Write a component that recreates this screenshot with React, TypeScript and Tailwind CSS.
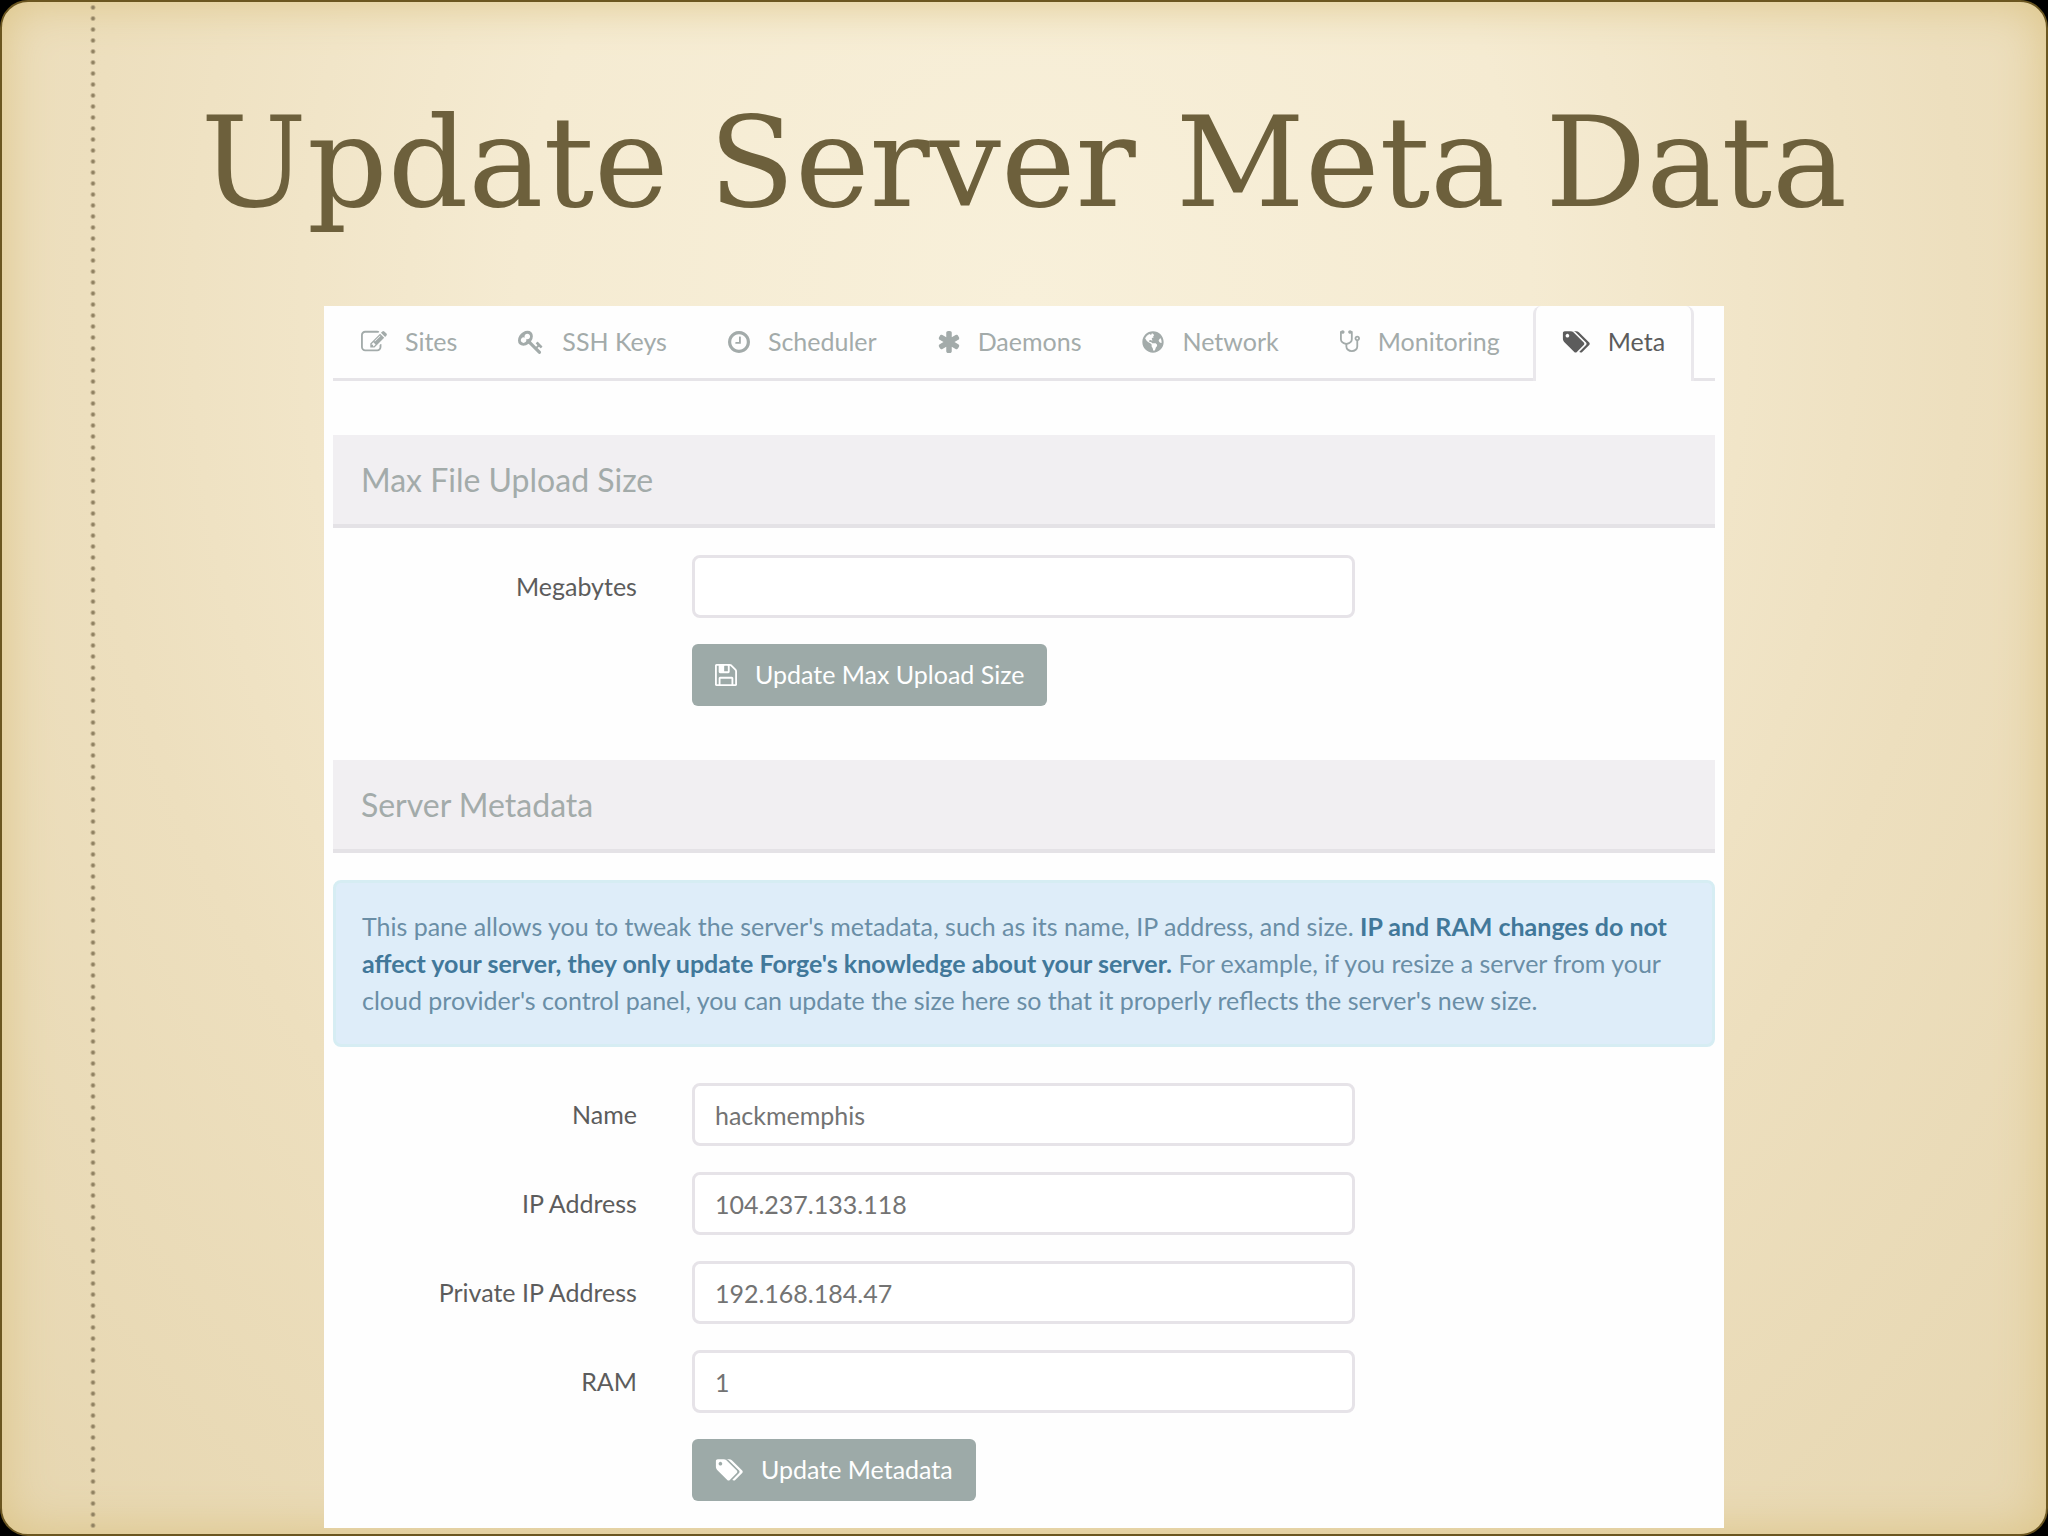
import { ReactNode } from "react"
import clsx from "clsx"
import { FaGlobeAmericas } from "react-icons/fa"

interface GlyphProps {
    d: string
    box?: string
    className?: string
}

const Glyph = ({ d, box = "0 0 1792 1792", className }: GlyphProps) => (
    <svg viewBox={box} fill="currentColor" aria-hidden="true" className={className}>
        <path d={d} />
    </svg>
)

const paths = {
    edit: "M888 1184l116-116-152-152-116 116v56h96v96h56zm440-720q-16-16-33 1l-350 350q-17 17-1 33t33-1l350-350q17-17 1-33zm80 594v190q0 119-84.5 203.5t-203.5 84.5h-832q-119 0-203.5-84.5t-84.5-203.5v-832q0-119 84.5-203.5t203.5-84.5h832q63 0 117 25 15 7 18 23 3 17-9 29l-49 49q-14 14-32 8-23-6-45-6h-832q-66 0-113 47t-47 113v832q0 66 47 113t113 47h832q66 0 113-47t47-113v-126q0-13 9-22l64-64q15-15 35-7t20 29zm-96-738l288 288-672 672h-288v-288zm444 132l-92 92-288-288 92-92q28-28 68-28t68 28l152 152q28 28 28 68t-28 68z",
    key: "M832 512q0-80-56-136t-136-56-136 56-56 136q0 42 19 83-41-19-83-19-80 0-136 56t-56 136 56 136 136 56 136-56 56-136q0-42-19-83 41 19 83 19 80 0 136-56t56-136zm851 704q0 17-49 66t-66 49q-9 0-28.5-16t-36.5-33-38.5-40-24.5-26l-96 96 220 220q28 28 28 68 0 42-39 81t-81 39q-40 0-68-28l-671-671q-176 131-365 131-163 0-265.5-102.5t-102.5-265.5q0-160 95-313t248-248 313-95q163 0 265.5 102.5t102.5 265.5q0 189-131 365l355 355 96-96q-3-3-26-24.5t-40-38.5-33-36.5-16-28.5q0-17 49-66t66-49q13 0 23 10 6 6 46 44.5t82 79.5 86.5 86 73 78 28.5 41z",
    clock: "M1024 544v448q0 14-9 23t-23 9h-320q-14 0-23-9t-9-23v-64q0-14 9-23t23-9h224v-352q0-14 9-23t23-9h64q14 0 23 9t9 23zm416 352q0-148-73-273t-198-198-273-73-273 73-198 198-73 273 73 273 198 198 273 73 273-73 198-198 73-273zm224 0q0 209-103 385.5t-279.5 279.5-385.5 103-385.5-103-279.5-279.5-103-385.5 103-385.5 279.5-279.5 385.5-103 385.5 103 279.5 279.5 103 385.5z",
    asterisk: "M1546 1050q46 26 59.5 77.5t-12.5 97.5l-64 110q-26 46-77.5 59.5t-97.5-12.5l-266-153v307q0 52-38 90t-90 38h-128q-52 0-90-38t-38-90v-307l-266 153q-46 26-97.5 12.5t-77.5-59.5l-64-110q-26-46-12.5-97.5t59.5-77.5l266-154-266-154q-46-26-59.5-77.5t12.5-97.5l64-110q26-46 77.5-59.5t97.5 12.5l266 153v-307q0-52 38-90t90-38h128q52 0 90 38t38 90v307l266-153q46-26 97.5-12.5t77.5 59.5l64 110q26 46 12.5 97.5t-59.5 77.5l-266 154z",
    stethoscope: "M1344 640q0-26-19-45t-45-19-45 19-19 45 19 45 45 19 45-19 19-45zm128 0q0 62-35.5 111t-92.5 70v395q0 159-131.5 271.5t-316.5 112.5-316.5-112.5-131.5-271.5v-132q-164-20-274-128t-110-252v-512q0-26 19-45t45-19q6 0 16 2 17-30 47-48t65-18q53 0 90.5 37.5t37.5 90.5-37.5 90.5-90.5 37.5q-33 0-64-18v402q0 106 94 181t226 75 226-75 94-181v-402q-31 18-64 18-53 0-90.5-37.5t-37.5-90.5 37.5-90.5 90.5-37.5q35 0 65 18t47 48q10-2 16-2 26 0 45 19t19 45v512q0 144-110 252t-274 128v132q0 106 94 181t226 75 226-75 94-181v-395q-57-21-92.5-70t-35.5-111q0-80 56-136t136-56 136 56 56 136z",
    tags: "M576 448q0-53-37.5-90.5t-90.5-37.5-90.5 37.5-37.5 90.5 37.5 90.5 90.5 37.5 90.5-37.5 37.5-90.5zm1067 576q0 53-37 90l-491 492q-39 37-91 37-53 0-90-37l-715-716q-38-37-64.5-101t-26.5-117v-416q0-52 38-90t90-38h416q53 0 117 26.5t102 64.5l715 714q37 39 37 91zm384 0q0 53-37 90l-491 492q-39 37-91 37-36 0-59-14t-53-45l470-470q37-37 37-90 0-52-37-91l-715-714q-38-38-102-64.5t-117-26.5h224q53 0 117 26.5t102 64.5l715 714q37 39 37 91z",
    save: "M512 1536h768v-384h-768v384zm896 0h128v-896q0-14-10-38.5t-20-34.5l-281-281q-10-10-34-20t-39-10v416q0 40-28 68t-68 28h-576q-40 0-68-28t-28-68v-416h-128v1280h128v-416q0-40 28-68t68-28h832q40 0 68 28t28 68v416zm-384-928v-320q0-13-9.5-22.5t-22.5-9.5h-192q-13 0-22.5 9.5t-9.5 22.5v320q0 13 9.5 22.5t22.5 9.5h192q13 0 22.5-9.5t9.5-22.5zm640 32v928q0 40-28 68t-68 28h-1344q-40 0-68-28t-28-68v-1344q0-40 28-68t68-28h928q40 0 88 20t76 48l280 280q28 28 48 76t20 88z",
}

const tabs: { label: string, icon: ReactNode, active?: boolean }[] = [
    { label: "Sites", icon: <Glyph d={paths.edit} className="size-[26px]" /> },
    { label: "SSH Keys", icon: <Glyph d={paths.key} className="size-[26px]" /> },
    { label: "Scheduler", icon: <Glyph d={paths.clock} box="128 0 1536 1792" className="h-[26px] w-[22px]" /> },
    { label: "Daemons", icon: <Glyph d={paths.asterisk} box="128 0 1536 1792" className="h-[26px] w-[22px]" /> },
    { label: "Network", icon: <FaGlobeAmericas className="size-[22px]" /> },
    { label: "Monitoring", icon: <Glyph d={paths.stethoscope} box="64 0 1408 1792" className="h-[26px] w-5" /> },
    { label: "Meta", icon: <Glyph d={paths.tags} box="64 0 1984 1792" className="h-[26px] w-7" />, active: true },
]

const SectionHeading = ({ children }: { children: ReactNode }) => (
    <h2 className="flex h-[93px] items-center border-b-4 border-[#e4e2e6] bg-[#f1eff2] px-7 text-[32px] text-[#a3abaa]">
        {children}
    </h2>
)

const Field = ({ id, label, value = "" }: { id: string, label: string, value?: string }) => (
    <div className="grid grid-cols-[304px_minmax(0,663px)] items-center gap-x-[55px]">
        <label htmlFor={id} className="text-right">{label}</label>
        <input
            id={id}
            type="text"
            defaultValue={value}
            className="h-[63px] rounded-lg border-3 border-[#e6e3e8] bg-white px-5 text-[#737373] outline-none"
        />
    </div>
)

const SubmitButton = ({ icon, children }: { icon: ReactNode, children: ReactNode }) => (
    <button
        type="submit"
        className="ml-[359px] flex h-[62px] items-center gap-[18px] self-start rounded-md bg-[#9daaa8] px-[23px] text-white"
    >
        {icon}
        {children}
    </button>
)

const App = () => {
    return (
        <div className="min-h-screen bg-black font-['Lato',sans-serif] text-[25px] text-[#5c5c5c]">
            <div className="relative flex min-h-screen flex-col items-center overflow-hidden rounded-[28px] border-2 border-[#6b5620] bg-[radial-gradient(ellipse_at_50%_20%,#f8f0da_0%,#f5ebd2_35%,#eddfbe_65%,#e6d6b0_100%)] shadow-[inset_0_0_48px_#dcc486] pb-1.5">
                {/* stitched margin */}
                <div className="absolute inset-y-0 left-[88px] w-1.5 bg-[radial-gradient(circle,#8f8060_0_1px,transparent_3px)] bg-[length:6px_11px]" />

                <h1 className="flex h-[304px] items-center pt-4 font-['DejaVu_Serif',serif] text-[126px] whitespace-nowrap text-[#6d603c]">
                    Update Server Meta Data
                </h1>

                <main className="w-[68.5%] bg-[#fefefe] px-[9px] pb-[27px]">
                    <nav className="flex">
                        {tabs.map((tab) => (
                            <a
                                key={tab.label}
                                href="#"
                                className={clsx(
                                    "flex h-[75px] items-center gap-[18px] whitespace-nowrap",
                                    tab.active
                                        ? "rounded-t-lg border-x-3 border-[#eae8ec] px-[26px] pb-[3px] text-[#5c5c5c]"
                                        : "border-b-3 border-[#e6e4e8] pr-[33px] pl-7 text-[#a3abaa]"
                                )}
                            >
                                {tab.icon}
                                {tab.label}
                            </a>
                        ))}
                        <div className="grow border-b-3 border-[#e6e4e8]" />
                    </nav>

                    <form className="mt-[54px]">
                        <SectionHeading>Max File Upload Size</SectionHeading>
                        <div className="mt-[27px] flex flex-col gap-[26px]">
                            <Field id="megabytes" label="Megabytes" />
                            <SubmitButton icon={<Glyph d={paths.save} box="128 0 1536 1792" className="h-[26px] w-[22px]" />}>
                                Update Max Upload Size
                            </SubmitButton>
                        </div>
                    </form>

                    <form className="mt-[54px]">
                        <SectionHeading>Server Metadata</SectionHeading>
                        <p className="mt-[27px] rounded-lg border-3 border-[#d6edf3] bg-[#deedf9] px-[26px] py-[25px] leading-[37px] text-[#6a8ea6]">
                            This pane allows you to tweak the server's metadata, such as its name, IP address, and size.{" "}
                            <strong className="font-bold text-[#41789a]">
                                IP and RAM changes do not affect your server, they only update Forge's knowledge about your server.
                            </strong>{" "}
                            For example, if you resize a server from your cloud provider's control panel, you can update the
                            size here so that it properly reflects the server's new size.
                        </p>
                        <div className="mt-9 flex flex-col gap-[26px]">
                            <Field id="name" label="Name" value="hackmemphis" />
                            <Field id="ip" label="IP Address" value="104.237.133.118" />
                            <Field id="private-ip" label="Private IP Address" value="192.168.184.47" />
                            <Field id="ram" label="RAM" value="1" />
                            <SubmitButton icon={<Glyph d={paths.tags} box="64 0 1984 1792" className="h-[26px] w-7" />}>
                                Update Metadata
                            </SubmitButton>
                        </div>
                    </form>
                </main>
            </div>
        </div>
    )
}

export default App
